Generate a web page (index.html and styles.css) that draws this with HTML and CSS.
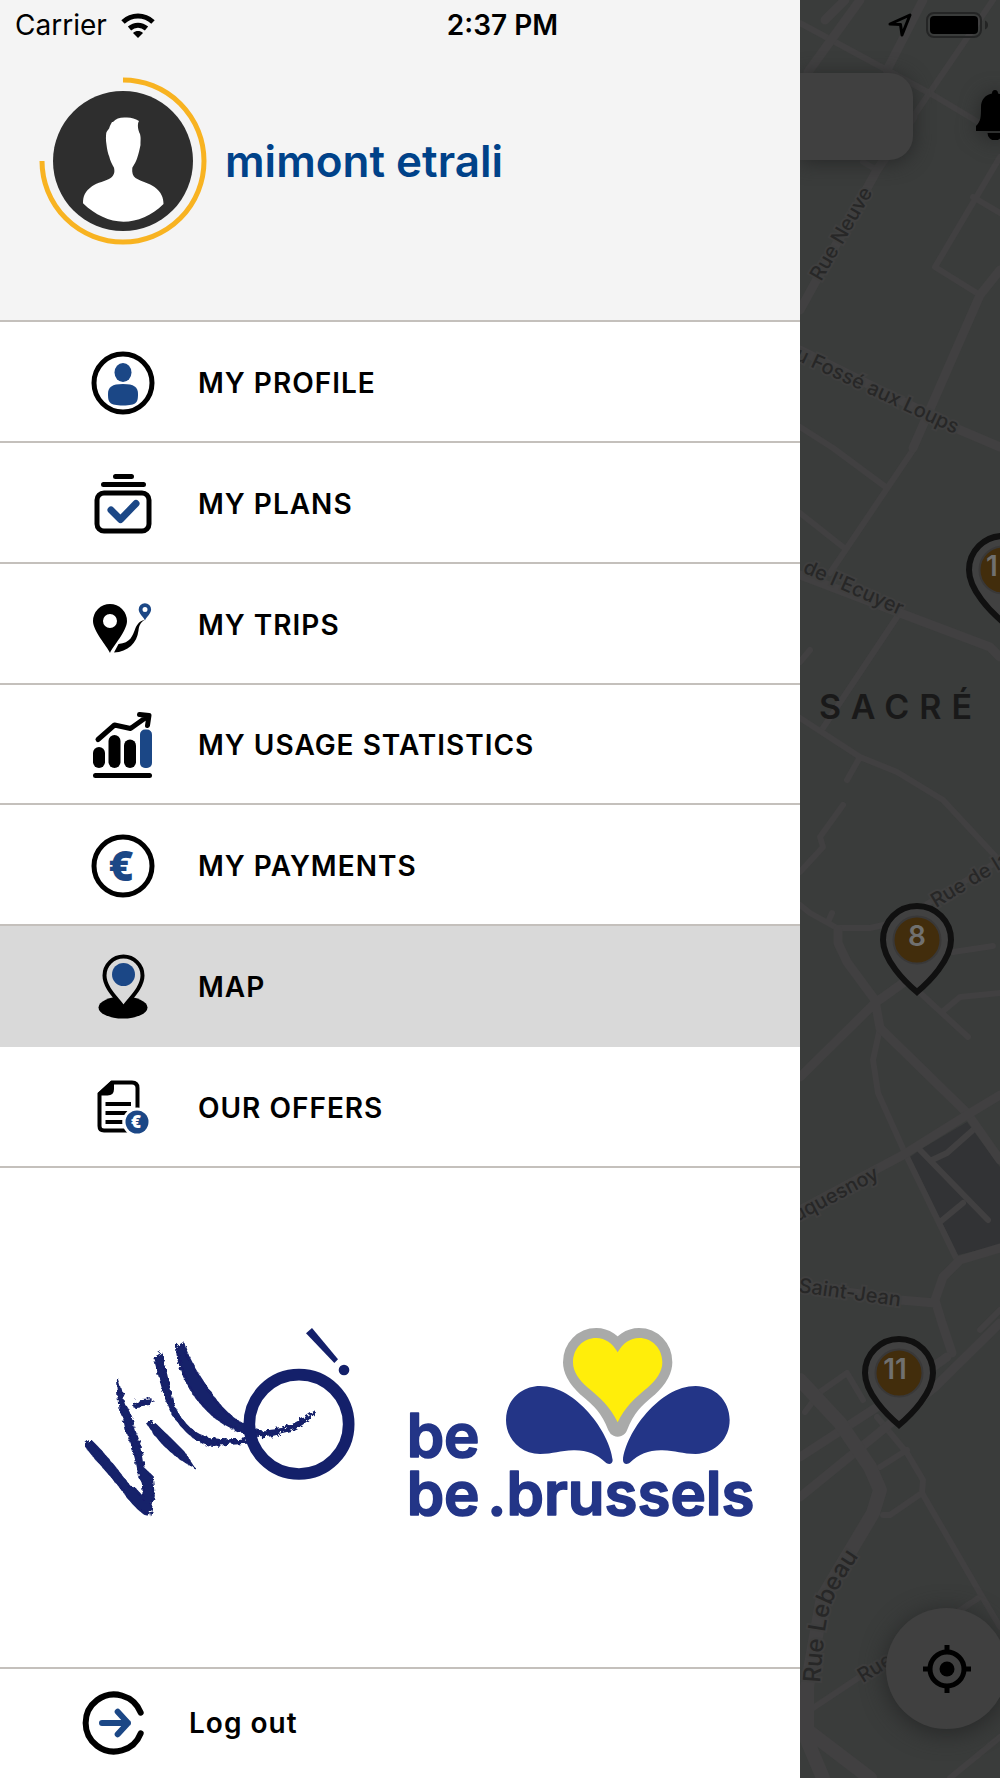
FILE: index.html
```html
<!DOCTYPE html>
<html lang="en">
<head>
    <meta charset="UTF-8">
    <meta name="viewport" content="width=device-width, initial-scale=1.0">
    <title>Villo! - Menu</title>
    <link rel="stylesheet" href="styles.css">
</head>
<body>
<div class="app">

    <div class="status-bar">
        <div class="status-left">
            <span>Carrier</span>
            <svg width="34" height="25" viewBox="0 0 34 25">
                <path d="M17 25l-5-5c3-2.600 7-2.600 10 0z"/>
                <path class="wifi-arc" d="M8.500 15.500c5-4.300 12-4.300 17 0M2 9c8.700-8 21.300-8 30 0"/>
            </svg>
        </div>
        <span class="clock">2:37 PM</span>
        <div class="status-right">
            <svg width="24" height="24" viewBox="0 0 24 24">
                <path class="location" d="M2 11L22 2l-8 20-1.500-10.500z"/>
            </svg>
            <svg width="64" height="28" viewBox="0 0 64 28">
                <rect class="battery-case" x="1" y="2" width="54" height="24" rx="7"/>
                <rect x="4" y="5" width="48" height="18" rx="4"/>
                <path class="battery-nub" d="M59 9.500c4 1 4 8 0 9z"/>
            </svg>
        </div>
    </div>

    <aside class="drawer">
        <header class="user">
            <svg class="avatar" width="168" height="168" viewBox="0 0 168 168">
                <path class="avatar-ring" d="M84 3A81 81 0 1 1 3 84"/>
                <circle class="avatar-disc" cx="84" cy="84" r="70"/>
                <path fill="#fff" d="M74 45c3-4 8-5 14-4.500 5 .3 8 1 12 3.500-2 3-1 9 1 13 1 4 .5 6 .5 11-1 5-2 9-3 12-1 4-3 7-5.200 10.700-.5 5 .5 8 3.200 10.300 6 4 14 5 19 9 7 5 9 11 9 17-12 12-26 17.700-40 17.700S56 138 44 126.300c0-7 2-12 9-17 5-4 14-5 19-8.600 3-3 4-5 3-10-2-4-4-7-4.700-11-1.300-3-2.300-8-2.800-12-.8-5-.6-8-.3-11.400.2-2 2-3 3-5 .5-2 1.500-4 2.800-6.300z"/>
            </svg>
            <h1>mimont etrali</h1>
        </header>

        <nav class="menu">
            <a href="#profile">
                <svg class="icon" viewBox="0 0 64 64">
                    <circle class="line" cx="32" cy="32" r="29"/>
                    <ellipse class="blue" cx="32" cy="21.500" rx="8.500" ry="9.500"/>
                    <path class="blue" d="M17 43c0-7 4-10 15-10s15 3 15 10c0 8-1 11.500-15 11.500S17 51 17 43z"/>
                </svg>
                MY PROFILE
            </a>
            <a href="#plans">
                <svg class="icon" viewBox="0 0 64 64">
                    <path class="line round" d="M24.500 4.500h16M12.500 12.500h40"/>
                    <rect class="line" x="6" y="21" width="52" height="38" rx="7"/>
                    <path class="tick" d="M20 38l9.500 9.500L45 31.500"/>
                </svg>
                MY PLANS
            </a>
            <a href="#trips">
                <svg class="icon" viewBox="0 0 64 64">
                    <path fill-rule="evenodd" d="M19 60C16 53 2 38 2 28a17 17 0 0 1 34 0c0 10-14 25-17 32zM19 21a7 7 0 1 0 0 14 7 7 0 0 0 0-14z"/>
                    <path d="M23 59.500l4.500-8.500c12-1 14-8 17-16 2-4 4-7 9.500-8.500-5 3-6 7-6.500 11C46 50 37 59 23 59.500z"/>
                    <path class="blue" fill-rule="evenodd" d="M54 27.500c-1-3-6.300-7-6.300-11a6.200 6.200 0 0 1 12.400 0c0 4-5.100 8-6.100 11zM54 14a2.500 2.500 0 1 0 0 5 2.500 2.500 0 0 0 0-5z"/>
                </svg>
                MY TRIPS
            </a>
            <a href="#statistics">
                <svg class="icon" viewBox="0 0 64 64">
                    <rect x="2" y="34" width="12" height="21" rx="6"/>
                    <rect x="17.500" y="22" width="12" height="33" rx="6"/>
                    <rect x="33" y="26.500" width="12" height="28.500" rx="6"/>
                    <rect class="blue" x="49" y="16.500" width="12" height="38.500" rx="5"/>
                    <path class="line round" d="M4.500 62.500h54"/>
                    <path class="line round trend" d="M7 26.500l16.500-14.500 16 3.500L57 3M48.500 1.500l9.500 1-1.500 10"/>
                </svg>
                MY USAGE STATISTICS
            </a>
            <a href="#payments">
                <svg class="icon" viewBox="0 0 64 64">
                    <circle class="line" cx="32" cy="32" r="29"/>
                    <text class="euro" x="30" y="47">€</text>
                </svg>
                MY PAYMENTS
            </a>
            <a href="#map" class="active">
                <svg class="icon" viewBox="0 0 64 64">
                    <ellipse cx="32" cy="52.500" rx="24.500" ry="11"/>
                    <path class="marker" d="M32.500 53C29 46 13.500 34 13.500 20.500a19 19 0 0 1 38 0C51.500 34 36 46 32.500 53z"/>
                    <circle class="blue" cx="32.500" cy="19.500" r="11.500"/>
                </svg>
                MAP
            </a>
            <a href="#offers">
                <svg class="icon" viewBox="0 0 64 64">
                    <path class="line thin" d="M21 6.500h20q5.500 0 5.500 5.500v38q0 4.500-4.500 4.500H13q-4.500 0-4.500-4.500V18z"/>
                    <path d="M7 17L20 5l3 2v6q0 6.500-6.500 6.500H8z"/>
                    <path class="line thin" d="M14.500 28H40M14.500 37h22M14.500 46h17"/>
                    <circle fill="#fff" cx="46" cy="46" r="14.500"/>
                    <circle class="blue" cx="46" cy="46" r="11.500"/>
                    <text class="euro-small" x="45" y="52">€</text>
                </svg>
                OUR OFFERS
            </a>
        </nav>

        <div class="logos">
            <svg width="310" height="220" viewBox="0 0 930 660" role="img" aria-label="Villo!">
                <defs>
                    <filter id="chalk" x="-10%" y="-10%" width="120%" height="120%">
                        <feTurbulence type="fractalNoise" baseFrequency=".07" numOctaves="3" seed="4"/>
                        <feDisplacementMap in="SourceGraphic" scale="22"/>
                    </filter>
                </defs>
                <g class="chalk" filter="url(#chalk)">
                    <path d="M48 408l16-14c40 38 80 90 115 136l14 4 26 30c2-8 4-20 0-40 2-8-6-14-12-28-2-40-20-90-36-130l-8-40-14-30-8-90c10 20 14 50 24 82 16 20 20 50 30 80 16 30 20 70 26 108l24 22 6 60-14 60c-30-16-60-50-80-80-40-50-80-90-109-130z"/>
                    <path d="M196 288l12-14 34-2-6 10zM236 344l14-6 50 48 40 40 26 40c-20-8-40-26-62-42-24-20-50-50-68-80z"/>
                    <path d="M254 144l20-12c8 30 18 80 32 140 14 50 54 95 94 108 40 14 80 12 130 8l-2 10c-30 2-60 4-90 6-50 6-90-40-120-78-30-40-46-120-64-182z"/>
                    <path d="M322 112l18-12c8 34 40 90 80 148 40 60 90 100 150 116 60 2 100-14 166-60-30 36-60 56-110 64-30 14-60 14-100 0-60-14-110-56-152-112-30-44-54-104-52-144z"/>
                </g>
                <circle cx="687" cy="343" r="149" fill="none" stroke="#14206a" stroke-width="35"/>
                <path fill="#14206a" d="M708 70l18-16 78 94-11 11z"/>
                <circle fill="#14206a" cx="822" cy="180" r="16"/>
            </svg>
            <svg width="380" height="220" viewBox="0 0 1140 660" role="img" aria-label="be.brussels">
                <path class="heart-edge" d="M683 127C668 100 645 84 619 84C580 84 549 115 549 157C549 187 568 210 592 232C632 265 660 290 683 350C706 290 734 265 774 232C798 210 817 187 817 157C817 115 786 84 747 84C721 84 698 100 683 127z"/>
                <path fill="#ffee0a" d="M683 127C668 100 645 84 619 84C580 84 549 115 549 157C549 187 568 210 592 232C632 265 660 290 683 337C706 290 734 265 774 232C798 210 817 187 817 157C817 115 786 84 747 84C721 84 698 100 683 127z"/>
                <path id="petal" fill="#233587" d="M348 330C348 270 395 228 450 228C560 228 660 370 668 450C668 463 655 465 646 457C620 432 590 420 550 421C510 422 490 432 450 432C390 430 348 385 348 330z"/>
                <use href="#petal" transform="translate(1367 0) scale(-1 1)"/>
                <g class="be-text">
                    <text x="50" y="441">be</text>
                    <text x="50" y="614">be</text>
                    <text x="292" y="614">.brussels</text>
                </g>
            </svg>
        </div>

        <button class="logout" type="button">
            <svg class="icon" viewBox="0 0 64 64">
                <path class="line round thick" d="M58.700 21.700a28.500 28.500 0 1 0 0 20.600"/>
                <path class="arrow" d="M20 32h26M35.700 20.700L46 32 35.700 43.300"/>
            </svg>
            Log out
        </button>
    </aside>

    <main class="map">
        <svg class="map-canvas" viewBox="0 0 200 1778" preserveAspectRatio="xMinYMin slice">
            <path class="park" d="M123 1148l44-26 33 45v78l-42 10-48-98z"/>
            <!-- small streets -->
            <g class="road">
                <path d="M0 23l133 72 50 30M193 0l-80 117M63 162l14 8M200 157l-65 110 45 28M173 197l27 16"/>
                <path d="M0 427l33 21 54 40M0 513l43 34M113 450L30 573M97 617L23 728M10 650l-10 12"/>
                <path d="M0 718l60 39 37 15 46 28 54 58M60 757l-13 23M43 805l-23 32 3 10-23 25"/>
                <path d="M0 905l10 8 27 15h33l27-6 103-62M32 913l-4 9M153 952l40-6M117 990l51 47M142 1012l18-15 40-4"/>
                <path d="M80 1028l-7 32 5 33 27 60 52 107M120 1150l68 70M132 1160l15-7 26-23M140 1222l23-19"/>
                <path d="M5 1412l15-20 27-19 16 27M77 1417l30 36 16 27-1 13-32 22h-7M80 1467l27-17M122 1493l58 100 20 34M180 1597L10 1710M200 1737l-50 41M200 1310l-20 20"/>
            </g>
            <!-- main streets -->
            <g class="road wide">
                <path d="M60 0L8 72M45 0L25 20M123 0L87 70M113 117l-36 53L0 310M200 270l-20 25-67 153M0 350l160 80 40 17"/>
                <path d="M0 575l100 38 90 34 10 10M38 930v13l9 19 28 38 5 28 87 85 33 47M0 1077l75-74 28-20"/>
                <path d="M0 1210l103-55 64-40 33-20M200 1248l-40 12-17 17-8 23 7 23 10 30M0 1285l100 15 35 3"/>
                <path d="M200 1323l-65 64-65 53-70 57M0 1457l77-50 70-50"/>
            </g>
            <g class="road avenue">
                <path d="M0 1380l40 43 30 44 10 23-7 23-50 84-16 90v53l16 38M7 1730l63 48"/>
            </g>
            <path id="lebeau" fill="none" d="M20 1683C22 1660 24 1625 31 1605C38 1588 48 1570 70 1540"/>
            <g class="street">
                <text transform="translate(21 282) rotate(-60)">Rue Neuve</text>
                <text transform="translate(-6 359) rotate(25)">u Fossé aux Loups</text>
                <text transform="translate(2 572) rotate(24)">de l'Ecuyer</text>
                <text transform="translate(136 908) rotate(-31)">Rue de la</text>
                <text transform="translate(-3 1222) rotate(-28)">uquesnoy</text>
                <text transform="translate(-2 1292) rotate(8)">Saint-Jean</text>
                <text transform="translate(63 1683) rotate(-32)">Rue</text>
                <text class="big"><textPath href="#lebeau">Rue Lebeau</textPath></text>
            </g>
            <text class="district" x="19" y="719">SACRÉ</text>

            <g transform="translate(203 570)">
                <path class="pin" d="M0 52C-12 42-34 20-34 0a34 34 0 0 1 68 0C34 20 12 42 0 52z"/>
                <circle class="pin-disc" r="23.500"/>
                <text class="pin-count" x="-11" y="6">1</text>
            </g>
            <g transform="translate(117 940)">
                <path class="pin" d="M0 52C-12 42-34 20-34 0a34 34 0 0 1 68 0C34 20 12 42 0 52z"/>
                <circle class="pin-disc" r="23.500"/>
                <text class="pin-count" y="6">8</text>
            </g>
            <g transform="translate(99 1373)">
                <path class="pin" d="M0 52C-12 42-34 20-34 0a34 34 0 0 1 68 0C34 20 12 42 0 52z"/>
                <circle class="pin-disc" r="23.500"/>
                <text class="pin-count" x="-4" y="6">11</text>
            </g>
        </svg>

        <input class="search" type="text" aria-label="Search">
        <button class="bell" type="button" aria-label="Notifications">
            <svg width="40" height="50" viewBox="0 0 40 50">
                <path d="M20 0c2 0 3 1.500 3 3.500C30 5 34 10 34 17c0 10 0 14 5 19v5H1v-5c5-5 5-9 5-19C6 10 10 5 17 3.500 17 1.500 18 0 20 0zM12.500 43h15a7.500 7.500 0 0 1-15 0z"/>
            </svg>
        </button>
        <button class="locate" type="button" aria-label="Locate me">
            <svg width="48" height="48" viewBox="0 0 48 48">
                <circle cx="24" cy="24" r="17" fill="none" stroke="#000" stroke-width="5"/>
                <circle cx="24" cy="24" r="7.500"/>
                <path stroke="#000" stroke-width="5" d="M24 0v7M24 41v7M0 24h7M41 24h7"/>
            </svg>
        </button>
    </main>

</div>
</body>
</html>
```
FILE: styles.css
```css
* {
    box-sizing: border-box;
}
body {
    margin: 0;
    font-family: Inter, Roboto, sans-serif;
    font-size: 28px;
    color: #000;
    background-color: #3a3c3b;
}
svg {
    display: block;
    flex: none;
}
.app {
    position: relative;
    display: flex;
    min-height: 100vh;
}

/* status bar lies over drawer and map */
.status-bar {
    position: absolute;
    top: 0;
    left: 0;
    right: 0;
    z-index: 2;
    display: grid;
    grid-template-columns: 1fr auto 1fr;
    align-items: center;
    height: 50px;
    padding: 0 10px 0 15px;
}
.status-left,
.status-right {
    display: flex;
    align-items: center;
    gap: 14px;
}
.status-right {
    justify-content: flex-end;
}
.clock {
    font-weight: 600;
}
.wifi-arc {
    fill: none;
    stroke: #000;
    stroke-width: 5;
}
.location {
    fill: none;
    stroke: #000;
    stroke-width: 3;
    stroke-linejoin: round;
}
.battery-case {
    fill: none;
    stroke: #242525;
    stroke-width: 2;
}
.battery-nub {
    fill: #242525;
}

.drawer {
    display: flex;
    flex-direction: column;
    width: 80%;
    background-color: #fff;
}
.user {
    display: flex;
    align-items: flex-start;
    gap: 18px;
    height: 322px;
    padding: 77px 39px 0;
    background-color: #f4f4f4;
    border-bottom: 2px solid #c4c0bc;
}
.user h1 {
    margin: 0;
    font-size: 44px;
    font-weight: 600;
    line-height: 168px;
    color: #004289;
}
.avatar-ring {
    fill: none;
    stroke: #f8b321;
    stroke-width: 5;
}
.avatar-disc {
    fill: #2e2e2e;
}

.menu {
    display: grid;
    grid-auto-rows: 1fr;
    height: 846px;
}
.menu a {
    display: flex;
    align-items: center;
    gap: 43px;
    padding: 3px 0 0 91px;
    border-bottom: 2px solid #c4c0bc;
    color: #000;
    font-weight: 600;
    letter-spacing: 1px;
    text-decoration: none;
}
.menu a.active {
    background-color: #d9d9d9;
    border-color: #d9d9d9;
}
.icon {
    width: 64px;
    height: 64px;
    overflow: visible;
}
.line {
    fill: none;
    stroke: #000;
    stroke-width: 5;
}
.line.thin {
    stroke-width: 4;
}
.line.thick {
    stroke-width: 6;
}
.round {
    stroke-linecap: round;
    stroke-linejoin: round;
}
.blue {
    fill: #1b4786;
}
.tick,
.arrow {
    fill: none;
    stroke: #1b4786;
    stroke-width: 7;
    stroke-linecap: round;
    stroke-linejoin: round;
}
.arrow {
    stroke-width: 6;
}
.marker {
    fill: #d9d9d9;
    stroke: #000;
    stroke-width: 4;
}
.euro,
.euro-small {
    font-family: "Open Sans", sans-serif;
    font-size: 42px;
    font-weight: 800;
    letter-spacing: 0;
    text-anchor: middle;
    fill: #1b4786;
}
.euro-small {
    font-size: 17px;
    fill: #fff;
}

.logos {
    flex: 1;
    display: flex;
    align-items: center;
    gap: 10px;
    padding: 4px 0 0 70px;
}
.chalk {
    fill: #14206a;
    stroke: #14206a;
    stroke-width: 7;
}
.heart-edge {
    fill: #a9aaa9;
    stroke: #a9aaa9;
    stroke-width: 60;
    stroke-linejoin: round;
}
.be-text {
    font-size: 180px;
    font-weight: 600;
    fill: #233587;
    stroke: #233587;
    stroke-width: 5;
    stroke-linejoin: round;
}
.logout {
    display: flex;
    align-items: center;
    gap: 43px;
    height: 111px;
    padding: 0 0 2px 82px;
    border: 0;
    border-top: 2px solid #c4c0bc;
    background: none;
    color: #000;
    font: inherit;
    font-weight: 600;
    letter-spacing: 1px;
}

/* dimmed map behind the drawer */
.map {
    position: relative;
    flex: 1;
    overflow: hidden;
    background-color: #3a3c3b;
}
.map-canvas {
    position: absolute;
    inset: 0;
    width: 100%;
    height: 100%;
}
.park {
    fill: #323335;
}
.road {
    fill: none;
    stroke: #414041;
    stroke-width: 6;
    stroke-linecap: round;
    stroke-linejoin: round;
}
.road.wide {
    stroke-width: 9;
}
.road.avenue {
    stroke-width: 14;
}
.street {
    font-size: 20px;
    font-weight: 500;
    fill: #272727;
    stroke: #3f3f3f;
    stroke-width: 4;
    paint-order: stroke;
}
.street .big {
    font-size: 24px;
}
.district {
    font-size: 34px;
    font-weight: 600;
    letter-spacing: 10px;
    fill: #191919;
}
.pin {
    fill: #414141;
    stroke: #101010;
    stroke-width: 6;
}
.pin-disc {
    fill: #422d0c;
    stroke: #393838;
    stroke-width: 2;
}
.pin-count {
    font-size: 28px;
    font-weight: 600;
    text-anchor: middle;
    fill: #70706f;
}
.search {
    position: absolute;
    top: 73px;
    left: 0;
    width: 113px;
    height: 87px;
    border: 0;
    border-radius: 0 24px 24px 0;
    background-color: #404040;
    box-shadow: 0 2px 20px #262727;
}
.bell,
.locate {
    position: absolute;
    padding: 0;
    border: 0;
    background: none;
}
.bell {
    top: 90px;
    right: -15px;
    filter: drop-shadow(0 2px 10px #262727);
}
.locate {
    right: -7px;
    bottom: 49px;
    display: grid;
    place-items: center;
    width: 121px;
    height: 121px;
    border-radius: 50%;
    background-color: #404040;
    box-shadow: 0 4px 24px #262727;
}
```
